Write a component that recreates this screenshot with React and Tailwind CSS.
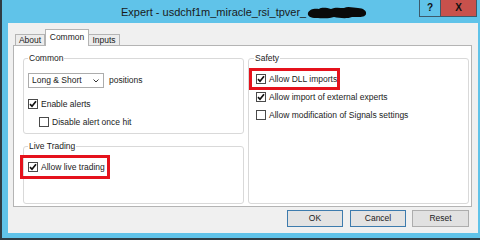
import React from "react";

const font = "font-['Liberation_Sans',Arial,sans-serif]";

function Check({ checked }) {
    return (
        <span className="w-[10px] h-[10px] shrink-0 bg-white border border-[#4a4a4a] flex items-center justify-center">
            {checked && (
                <svg width="8" height="8" viewBox="0 0 8 8">
                    <path d="M1 4.2 L3 6.3 L7 1.3" fill="none" stroke="#111" strokeWidth="1.7" />
                </svg>
            )}
        </span>
    );
}

function Row({ checked, label, className = "" }) {
    return (
        <div className={`h-[18px] flex items-center gap-[3px] ${className}`}>
            <Check checked={checked} />
            <span className="text-[8.5px] leading-none text-[#1b1b1b]">{label}</span>
        </div>
    );
}

function Group({ title, className = "", children }) {
    return (
        <fieldset className={`border border-[#d9d9d9] rounded-[3px] pl-[4px] ${className}`}>
            <legend className="px-[1px] text-[8.5px] leading-[12px] text-[#1b1b1b]">{title}</legend>
            {children}
        </fieldset>
    );
}

function Blob() {
    return (
        <svg width="60" height="13" viewBox="0 0 60 13" className="ml-[1px]">
            <path
                d="M1 7 C2 3,8 2,12 3 C15 1,20 2,24 3 C28 1,33 2,37 2 C41 0,47 2,51 2 C56 2,60 5,59 8 C58 12,50 11,45 11 C40 13,32 12,27 11 C22 13,14 12,9 12 C4 12,0 10,1 7 Z"
                fill="#0a0a0a"
            />
        </svg>
    );
}

export default function App() {
    return (
        <div className={`w-[480px] h-[240px] flex flex-col bg-[#60c3e9] border-l-2 border-b-2 border-[#2f3c44] overflow-hidden ${font}`}>
            {/* title bar */}
            <div className="h-[23px] shrink-0 flex items-start">
                <div className="flex-1 h-[24px] flex items-center pl-[119px]">
                    <span className="text-[11px] leading-none text-[#1a1a1a]">Expert - usdchf1m_miracle_rsi_tpver_</span>
                    <Blob />
                </div>
                <div className="flex h-[17px] mr-[3px]">
                    <div className="w-[22px] h-full border border-t-0 border-[#3c5a6b] flex items-center justify-center text-[10px] font-bold leading-none text-[#111]">?</div>
                    <div className="w-[36px] h-full bg-[#c8514c] border-b border-r border-[#3c5a6b] flex items-center justify-center text-[10px] font-bold leading-none text-[#111]">X</div>
                </div>
            </div>

            {/* client area */}
            <div className="flex-1 ml-[6px] mr-[2px] mb-[5px] bg-[#f0f0f0] flex flex-col pl-[5px] pr-[6px]">
                {/* tabs */}
                <div className="h-[22px] pt-[6px] shrink-0 flex items-end pl-[2px] text-[8.5px] leading-none text-[#1b1b1b]">
                    <div className="w-[30px] h-[11px] border border-b-0 border-[#b4b4b4] bg-[#ececec] flex items-center justify-center">About</div>
                    <div className="w-[44px] h-[17px] -mb-px relative z-10 border border-b-0 border-[#b4b4b4] bg-white flex items-center justify-center pb-[2px]">Common</div>
                    <div className="w-[31px] h-[11px] border border-b-0 border-l-0 border-[#b4b4b4] bg-[#ececec] flex items-center justify-center">Inputs</div>
                </div>

                {/* panel */}
                <div className="h-[162px] shrink-0 bg-white border border-[#b4b4b4] flex gap-[4px] pl-[9px] pr-[2px] pt-[6px] pb-[2px]">
                    <div className="w-[221px] flex flex-col gap-[6px]">
                        <Group title="Common" className="h-[82px]">
                            <div className="flex items-center gap-[5px] mt-[9px]">
                                <div className="w-[76px] h-[15px] bg-white border border-[#acacac] flex items-center justify-between pl-[3px] pr-[4px]">
                                    <span className="text-[8.5px] leading-none text-[#1b1b1b]">Long &amp; Short</span>
                                    <svg width="6" height="4" viewBox="0 0 6 4">
                                        <path d="M0.5 0.5 L3 3 L5.5 0.5" fill="none" stroke="#333" strokeWidth="1" />
                                    </svg>
                                </div>
                                <span className="text-[8.5px] leading-none text-[#1b1b1b]">positions</span>
                            </div>
                            <Row checked label="Enable alerts" className="mt-[7px]" />
                            <Row label="Disable alert once hit" className="ml-[11px]" />
                        </Group>
                        <Group title="Live Trading" className="flex-1">
                            <div className="relative mt-[6px]">
                                <Row checked label="Allow live trading" />
                                <span className="absolute left-[-8px] top-[-3px] w-[90px] h-[24px] border-[3px] border-[#e5121c]" />
                            </div>
                        </Group>
                    </div>
                    <Group title="Safety" className="w-[221px] pl-[5px]">
                        <div className="relative mt-[6px] ml-[2px]">
                            <Row checked label="Allow DLL imports" />
                            <span className="absolute left-[-7px] top-[-2px] w-[91px] h-[22px] border-[3px] border-[#e5121c]" />
                        </div>
                        <Row checked label="Allow import of external experts" className="ml-[2px]" />
                        <Row label="Allow modification of Signals settings" className="ml-[2px]" />
                    </Group>
                </div>

                {/* buttons */}
                <div className="mt-[3px] flex justify-end pr-[3px] text-[8.5px] leading-none text-[#1b1b1b]">
                    <button className="w-[56px] h-[17px] border border-[#3d7bad] bg-[#e3e3e3] mr-[7px]">OK</button>
                    <button className="w-[56px] h-[17px] border border-[#3d7bad] bg-[#e3e3e3] mr-[6px]">Cancel</button>
                    <button className="w-[57px] h-[17px] border border-[#adadad] bg-[#e1e1e1]">Reset</button>
                </div>
            </div>
        </div>
    );
}
